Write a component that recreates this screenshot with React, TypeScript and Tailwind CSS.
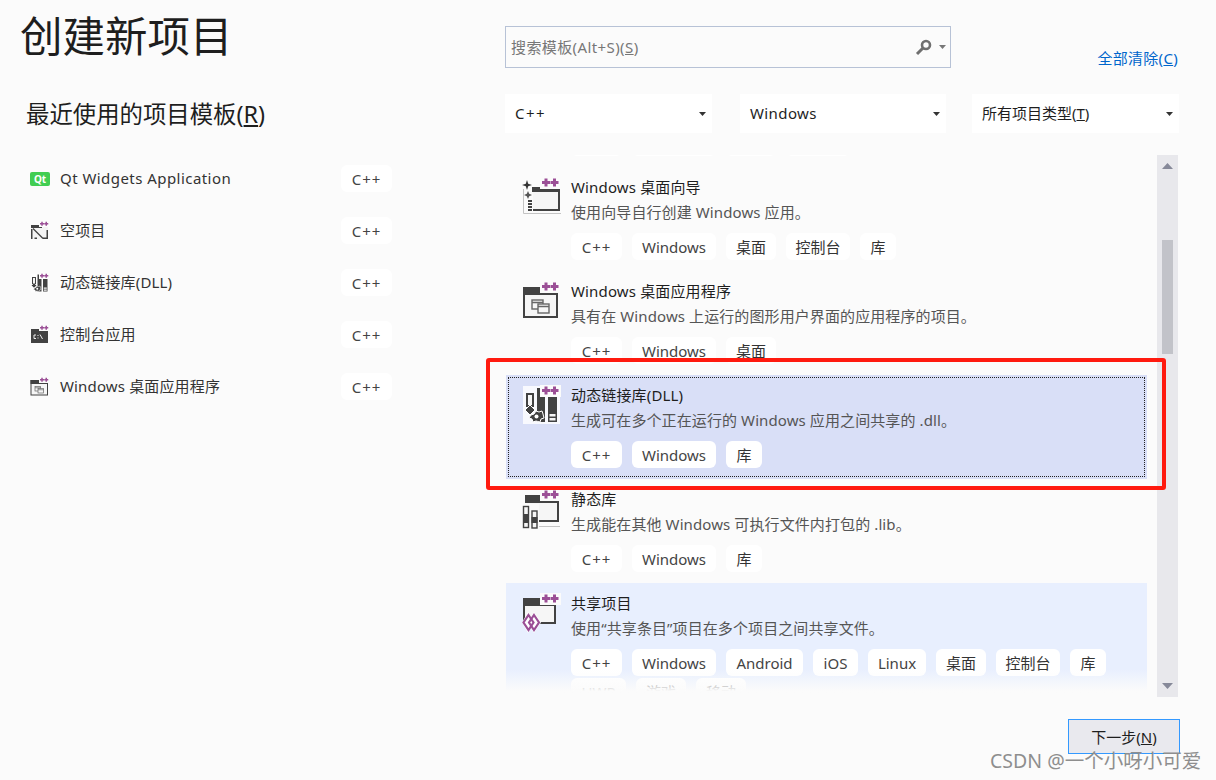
import React from 'react';

const DARK = '#424242';

function Pluses() {
  return (
    <>
      <rect x="18" y="0" width="21" height="12" fill="#fbfbfb" />
      <path d="M20 5.500h8M24 1.500v8M28.500 5.500h8M32.500 1.500v8" stroke="#9b4f96" strokeWidth="3" fill="none" />
    </>
  );
}

function Frame() {
  return (
    <>
      <rect x="2" y="7" width="33" height="29" fill="#f6f6f6" stroke={DARK} strokeWidth="2" />
      <rect x="1" y="6" width="35" height="8" fill={DARK} />
    </>
  );
}

function WizardIcon() {
  return (
    <>
      <path d="M1.500 12V36.500H39" stroke="#c4c4c4" strokeWidth="1" fill="none" />
      <rect x="11" y="14" width="26" height="19" fill="#f6f6f6" />
      <path d="M11 33h26V11" stroke={DARK} strokeWidth="2" fill="none" />
      <rect x="10" y="10" width="28" height="5" fill={DARK} />
      <path d="M5 3l1.200 3.800L10 8 6.200 9.200 5 13 3.800 9.200 0 8l3.800-1.200z" fill="#333" />
      <path d="M6 14l1.200 2.800L10 18l-2.800 1.200L6 22l-1.200-2.800L2 18l2.800-1.200z" fill="#555" />
      <path d="M6 23h4v2H6zM6 26h4v2H6zM6 29h4v2H6zM6 32h4v2H6z" fill={DARK} />
      <Pluses />
    </>
  );
}

function DesktopIcon() {
  return (
    <>
      <Frame />
      <rect x="10" y="19" width="11" height="9" fill="#f6f6f6" stroke="#666" strokeWidth="1.400" />
      <rect x="16" y="23" width="11" height="9" fill="#f6f6f6" stroke="#666" strokeWidth="1.400" />
      <path d="M10 21.500h11M16 25.500h11" stroke="#666" strokeWidth="1.400" />
      <Pluses />
    </>
  );
}

function DllIcon() {
  return (
    <>
      <rect x="1" y="1" width="37" height="38" fill="#fff" opacity="0.8" />
      <rect x="5" y="9" width="6" height="12" fill="#f6f6f6" stroke={DARK} strokeWidth="2" />
      <rect x="15" y="3" width="8" height="34" fill={DARK} />
      <rect x="26" y="12" width="9" height="25" fill={DARK} />
      <path d="M27.500 29h6v2.500h-6zM27.500 33h6v2.500h-6z" fill="#f6f6f6" />
      <Pluses />
      <path d="M8 20l5 5-5 5-5-5z" fill={DARK} stroke="#fff" strokeWidth="1" />
      <path d="M14 26l3 1 3-1 1 3 1 4-3 1-1 3-4-1-3 1-1-3-3-1 2-3 3-1z" fill={DARK} stroke="#fff" strokeWidth="1" />
      <circle cx="14.500" cy="31.500" r="2" fill="#fff" />
    </>
  );
}

function StaticIcon() {
  return (
    <>
      <path d="M14 37.500H38" stroke="#c4c4c4" strokeWidth="1" />
      <rect x="5" y="7" width="31" height="25" fill="#f6f6f6" />
      <path d="M16 32h20V7" stroke={DARK} strokeWidth="2" fill="none" />
      <rect x="3" y="6" width="33" height="8" fill={DARK} />
      <rect x="0" y="15" width="17" height="25" fill="#fbfbfb" />
      <rect x="1.500" y="17.500" width="5" height="21" fill="#f6f6f6" stroke={DARK} strokeWidth="1.400" />
      <rect x="10" y="22" width="5" height="17" fill="#f6f6f6" stroke={DARK} strokeWidth="1.400" />
      <path d="M1 25h6v9H1zM9.500 28h6v6h-6z" fill={DARK} />
      <Pluses />
    </>
  );
}

function SharedIcon() {
  return (
    <>
      <rect x="2" y="6" width="31" height="24" fill="#f6f6f6" stroke={DARK} strokeWidth="2" />
      <rect x="1" y="5" width="32" height="8" fill={DARK} />
      <Pluses />
      <path d="M6 19l7 10.500L6 40l-6-10.500z" fill="#fff" />
      <path d="M12 19l7 10.500L12 40l-7-10.500z" fill="#fff" />
      <path d="M6.500 22l5 7.500-5 7.500-5-7.500z" fill="none" stroke="#9b4f96" strokeWidth="2.200" />
      <path d="M12 22l5 7.500-5 7.500-5-7.500z" fill="none" stroke="#9b4f96" strokeWidth="2.200" />
    </>
  );
}

function EmptyIcon() {
  return (
    <>
      <rect x="2" y="8" width="34" height="28" fill="#f4f4f4" />
      <path d="M2 8h22v6H2zM2 16h3v20H2zM9 33h5v3H9zM26 33h10v3H26zM33 18h3v16h-3z" fill={DARK} />
      <path d="M6 15l20 20" stroke={DARK} strokeWidth="2.500" />
      <Pluses />
    </>
  );
}

function ConsoleIcon() {
  return (
    <>
      <rect x="2" y="8" width="34" height="28" fill={DARK} />
      <path d="M12 20h-4v7h4M16 20v2M16 25v2M20 19l5 9" stroke="#eee" strokeWidth="2" fill="none" />
      <Pluses />
    </>
  );
}

const icons = {
  wizard: WizardIcon,
  desktop: DesktopIcon,
  dll: DllIcon,
  static: StaticIcon,
  shared: SharedIcon,
  empty: EmptyIcon,
  console: ConsoleIcon,
};

function TemplateIcon({ name, size }: { name: keyof typeof icons; size: number }) {
  const Glyph = icons[name];
  return (
    <svg width={size} height={size} viewBox="0 0 40 40" className="shrink-0">
      <Glyph />
    </svg>
  );
}

function Caret({ className }: { className?: string }) {
  return (
    <svg width="7" height="4" viewBox="0 0 7 4" className={className}>
      <path d="M0 0h7L3.500 4z" fill="currentColor" />
    </svg>
  );
}

const tagClass: Record<string, string> = {
  'C++': 'w-[51px] tracking-[1px] text-[#444]',
  Windows: 'w-[84px] text-[#444]',
  Android: 'w-[77px] text-[#444]',
  iOS: 'w-[45px] text-[#444]',
  Linux: 'w-[58px] text-[#444]',
  桌面: 'w-[50px] text-[#333]',
  控制台: 'w-[64px] text-[#333]',
  库: 'w-[36px] text-[#333]',
  UWP: 'w-[55px] text-[#444]',
  游戏: 'w-[50px] text-[#333]',
  移动: 'w-[50px] text-[#333]',
};

function Tag({ label }: { label: string }) {
  return (
    <span className={`flex h-[27px] items-center justify-center rounded-md bg-white pt-[1px] text-[15px] ${tagClass[label]}`}>
      {label}
    </span>
  );
}

function Select({ className, children }: { className: string; children: React.ReactNode }) {
  return (
    <div className={`flex h-[39px] items-center justify-between bg-white pl-[10px] pr-[6px] text-[15px] text-[#1e1e1e] ${className}`}>
      <span>{children}</span>
      <Caret className="text-[#333]" />
    </div>
  );
}

const recent: { name: string; icon?: keyof typeof icons }[] = [
  { name: 'Qt Widgets Application' },
  { name: '空项目', icon: 'empty' },
  { name: '动态链接库(DLL)', icon: 'dll' },
  { name: '控制台应用', icon: 'console' },
  { name: 'Windows 桌面应用程序', icon: 'desktop' },
];

const templates: {
  title: string;
  desc: string;
  icon: keyof typeof icons;
  tags: string[];
  extra?: string[];
}[] = [
  {
    title: 'Windows 桌面向导',
    desc: '使用向导自行创建 Windows 应用。',
    icon: 'wizard',
    tags: ['C++', 'Windows', '桌面', '控制台', '库'],
  },
  {
    title: 'Windows 桌面应用程序',
    desc: '具有在 Windows 上运行的图形用户界面的应用程序的项目。',
    icon: 'desktop',
    tags: ['C++', 'Windows', '桌面'],
  },
  {
    title: '动态链接库(DLL)',
    desc: '生成可在多个正在运行的 Windows 应用之间共享的 .dll。',
    icon: 'dll',
    tags: ['C++', 'Windows', '库'],
  },
  {
    title: '静态库',
    desc: '生成能在其他 Windows 可执行文件内打包的 .lib。',
    icon: 'static',
    tags: ['C++', 'Windows', '库'],
  },
  {
    title: '共享项目',
    desc: '使用“共享条目”项目在多个项目之间共享文件。',
    icon: 'shared',
    tags: ['C++', 'Windows', 'Android', 'iOS', 'Linux', '桌面', '控制台', '库'],
    extra: ['UWP', '游戏', '移动'],
  },
];

export default function App() {
  return (
    <div className="relative flex h-[780px] w-[1216px] overflow-hidden bg-[#fbfbfb] font-['Noto_Sans','Noto_Sans_CJK_SC',sans-serif]">
      {/* 左侧 */}
      <div className="w-[505px] shrink-0">
        <h1 className="ml-[20px] mt-[7px] text-[42.500px] leading-[58px] text-[#1e1e1e]">创建新项目</h1>
        <h2 className="ml-[26px] mt-[33px] text-[23.400px] leading-[32px] text-[#1e1e1e]">
          最近使用的项目模板(<span className="underline">R</span>)
        </h2>
        <div className="mt-[35px] flex flex-col gap-[25px] pl-[30px] pr-[113px]">
          {recent.map((item) => (
            <div key={item.name} className="flex h-[27px] items-center justify-between">
              <div className="flex items-center gap-[10px] text-[15px] text-[#333]">
                {item.icon ? (
                  <TemplateIcon name={item.icon} size={20} />
                ) : (
                  <span className="flex h-[14px] w-[20px] items-center justify-center rounded-[2px] bg-[#41cd52] text-[10px] font-bold leading-none text-white">
                    Qt
                  </span>
                )}
                <span className={item.icon ? 'tracking-[0.15px]' : 'tracking-[0.45px]'}>{item.name}</span>
              </div>
              <Tag label="C++" />
            </div>
          ))}
        </div>
      </div>

      {/* 右侧 */}
      <div className="w-[675px] shrink-0">
        <div className="mt-[26px] flex h-[42px] items-start justify-between">
          <div className="flex h-[42px] w-[446px] items-center justify-between border border-[#b7c2d6] pl-[5px] pr-[4px] text-[15px] text-[#777]">
            <span className="tracking-[0.4px]">
              搜索模板(Alt+S)(<span className="underline">S</span>)
            </span>
            <div className="flex items-center gap-[7px] text-[#777]">
              <svg width="17" height="17" viewBox="0 0 17 17">
                <circle cx="11" cy="6" r="4" fill="none" stroke="#6f6f6f" strokeWidth="2.600" />
                <path d="M8 9l-6 6" stroke="#6f6f6f" strokeWidth="3" />
              </svg>
              <Caret />
            </div>
          </div>
          <span className="mr-[2px] mt-[22px] text-[15px] leading-[20px] tracking-[0.3px] text-[#0066cc]">
            全部清除(<span className="underline">C</span>)
          </span>
        </div>

        <div className="mt-[26px] flex">
          <Select className="w-[207px] tracking-[1.500px]">C++</Select>
          <Select className="ml-[28px] w-[206px] tracking-[0.4px]">Windows</Select>
          <Select className="ml-[26px] w-[207px]">
            所有项目类型(<span className="underline">T</span>)
          </Select>
        </div>

        <div className="mt-[22px] flex h-[542px] gap-[10px]">
          <div className="relative ml-[1px] h-[540px] w-[641px] overflow-hidden">
            <div className="-mt-[92px] flex flex-col">
              {/* 滚动到上方的一项，只露出标签底边 */}
              <div className="flex h-[104px] items-end pb-[11px] pl-[65px]">
                <div className="h-[27px] w-[51px] rounded-md bg-white" />
                <div className="ml-[10px] h-[27px] w-[84px] rounded-md bg-white" />
                <div className="ml-[10px] h-[27px] w-[50px] rounded-md bg-white" />
                <div className="ml-[10px] h-[27px] w-[64px] rounded-md bg-white" />
              </div>
              {templates.map((item) => (
                <div
                  key={item.title}
                  className={`flex shrink-0 gap-[9px] pl-[16px] pt-[10px] ${
                    item.icon === 'dll'
                      ? 'h-[104px] bg-[#d9dff7] outline-1 -outline-offset-[3px] outline-dotted outline-[#222]'
                      : item.icon === 'shared'
                        ? 'h-[140px] bg-[#e8effe]'
                        : 'h-[104px]'
                  }`}
                >
                  <TemplateIcon name={item.icon} size={40} />
                  <div>
                    <div className="text-[15px] leading-[20px] tracking-[0.15px] text-[#1e1e1e]">{item.title}</div>
                    <div className="mt-[5px] text-[15px] leading-[20px] tracking-[0.1px] text-[#555]">{item.desc}</div>
                    <div className="mt-[11px] flex gap-[10px]">
                      {item.tags.map((tag) => (
                        <Tag key={tag} label={tag} />
                      ))}
                    </div>
                    {item.extra && (
                      <div className="mt-[2px] flex gap-[10px]">
                        {item.extra.map((tag) => (
                          <Tag key={tag} label={tag} />
                        ))}
                      </div>
                    )}
                  </div>
                </div>
              ))}
            </div>
            <div className="absolute inset-x-0 bottom-0 h-[26px] bg-gradient-to-b from-[#fbfbfb00] to-[#fbfbfb] to-[85%]" />
          </div>

          {/* 滚动条 */}
          <div className="flex w-[21px] flex-col items-center bg-[#e8e8ec] py-[8px] text-[#868999]">
            <svg width="11" height="6" viewBox="0 0 11 6" className="shrink-0">
              <path d="M0 6h11L5.500 0z" fill="currentColor" />
            </svg>
            <div className="mt-[71px] h-[114px] w-[11px] bg-[#c2c3c9]" />
            <svg width="11" height="6" viewBox="0 0 11 6" className="mt-auto shrink-0">
              <path d="M0 0h11L5.500 6z" fill="currentColor" />
            </svg>
          </div>
        </div>

        <div className="mt-[22px] flex justify-end">
          <button className="h-[35px] w-[112px] border border-[#3399ff] bg-[#e9e9ee] pt-[1px] text-[15px] text-[#1e1e1e]">
            下一步(<span className="underline">N</span>)
          </button>
        </div>
      </div>

      {/* 红色标注框 */}
      <div className="absolute left-[486px] top-[358px] h-[132px] w-[680px] rounded-[3px] border-4 border-[#ff1a0f]" />

      {/* 水印 */}
      <span className="absolute left-[990px] top-[747px] text-[19.500px] leading-[28px] text-[#8e8e8e]">
        CSDN @一个小呀小可爱
      </span>
    </div>
  );
}
